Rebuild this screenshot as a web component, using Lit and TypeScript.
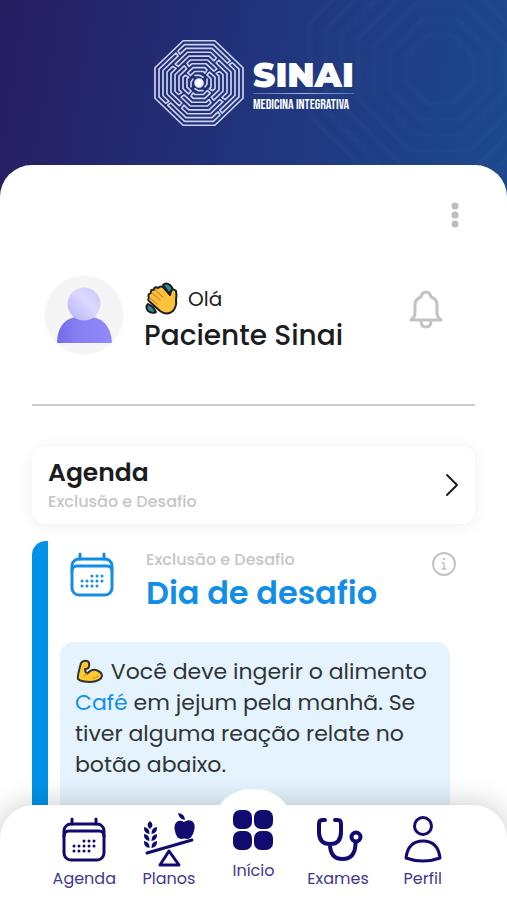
import { LitElement, html, svg, css } from "lit";
import { customElement } from "lit/decorators.js";

type Point = [number, number];

/** Upper part of an octagonal ring; start and end say how far it runs down each slanted side. */
function arc(radius: number, start: number, end: number): Point[] {
  const flat = radius * 0.36;
  const slant = radius - flat;
  return [
    [-flat - slant * start, -radius + slant * start],
    [-flat, -radius],
    [flat, -radius],
    [flat + slant * end, -radius + slant * end],
  ];
}

function hairpin(outer: number, start: number, end: number): string {
  const a = arc(outer, start, end);
  const b = arc(outer - 4, start, end).reverse();
  return `M${[...a, ...b].map((p) => p.map((n) => n.toFixed(1)).join(" ")).join("L")}Z`;
}

const octagon = (r: number): string => {
  const f = r * 0.36;
  return `M${-f} ${-r}H${f}L${r} ${-f}V${f}L${f} ${r}H${-f}L${-r} ${f}V${-f}Z`;
};

const quarter = [
  hairpin(40, 0.26, 0.66),
  hairpin(32, 0.6, 0.28),
  hairpin(24, 0.22, 0.6),
  hairpin(16, 0.54, 0.22),
].join("");

const maze = svg`
  <g transform="scale(1 .96)">
    <path d=${octagon(44)} />
    ${[0, 90, 180, 270].map((turn) => svg`<path d=${quarter} transform="rotate(${turn})" />`)}
    <path d="M-4-8H1L4-6M8-4V1L6 4M4 8H-1L-4 6M-8 4V-1L-6-4" />
  </g>
  <circle r="4" fill="#fff" stroke="#e6ebfb" stroke-dasharray="1 1" />`;

const calendar = svg`
  <rect x="2" y="7" width="40" height="36" rx="7" />
  <path d="M2 19q0-5 5-5h30q5 0 5 5M10 2v5M34 2v5" />
  <path class="dots" d="M22 24h.01M27 24h.01M32 24h.01M12 29h.01M17 29h.01M22 29h.01M27 29h.01M32 29h.01M12 34h.01M17 34h.01M22 34h.01M27 34h.01" />`;

const plans = svg`
  <path d="M4 36L49 23M26 34L17 48H36Z" />
  <g fill="currentColor" stroke="none">
    <path d="M7 4q5 4 0 8q-5-4 0-8ZM1 10q6 1 5.500 7q-6-1-5.500-7ZM14 10q-6 1-5.500 7q6-1 5.500-7ZM1 17q6 1 5.500 7q-6-1-5.500-7ZM14 17q-6 1-5.500 7q6-1 5.500-7ZM1 24q6 1 5.500 7q-6-1-5.500-7ZM14 24q-6 1-5.500 7q6-1 5.500-7Z" />
    <path d="M41 5q4-3 8-1q4 3 2 10q-2 7-6 8q-4-1-7 0q-5-1-6-8q-2-7 3-10q3-1 6 1ZM35-4q7 1 7 7q-6-1-7-7Z" />
  </g>`;

const home = svg`
  <g fill="currentColor" stroke="none">
    <rect x="2" y="1" width="19" height="19" rx="7" />
    <rect x="23" y="1" width="19" height="19" rx="7" />
    <rect x="2" y="22" width="19" height="19" rx="7" />
    <rect x="23" y="22" width="19" height="19" rx="7" />
  </g>`;

const exams = svg`
  <path stroke-width="4" d="M9 3H6Q3 3 3 7v8q0 12 11 12T25 15V7q0-4-3-4h-3M14 27q0 15 12.500 15t13-15v-2" />
  <circle cx="40" cy="20" r="4.500" stroke-width="4" />`;

const profile = svg`
  <circle cx="22" cy="9" r="8.500" />
  <path d="M5 41Q7 24 22 24T39 41Q31 44 22 44T5 41Z" />`;

const tabs = [
  { label: "Agenda", icon: calendar },
  { label: "Planos", icon: plans },
  { label: "Início", icon: home, current: true },
  { label: "Exames", icon: exams },
  { label: "Perfil", icon: profile },
];

@customElement("app-root")
export class AppRoot extends LitElement {
  static styles = css`
    :host {
      display: flex;
      flex-direction: column;
      position: relative;
      height: 100vh;
      overflow: hidden;
      background: linear-gradient(100deg, #271c60 0, #21327a 45%, #1d4a8d 100%) top / 100% 240px no-repeat #fff;
      color: #1b1d20;
      font-family: Poppins, Inter, "Open Sans", sans-serif;
    }
    * { box-sizing: border-box; }
    h1, h2, p { margin: 0; }
    button {
      border: 0;
      padding: 0;
      background: none;
      color: inherit;
      font: inherit;
      cursor: pointer;
    }
    svg {
      display: block;
      flex: none;
      fill: none;
      stroke: currentColor;
      stroke-linecap: round;
      stroke-linejoin: round;
      overflow: visible;
    }
    .banner {
      display: flex;
      flex: none;
      align-items: center;
      justify-content: center;
      gap: 8px;
      height: 165px;
      position: relative;
      color: #fff;
    }
    .pattern {
      position: absolute;
      inset: 0;
      width: 100%;
      height: 100%;
      overflow: hidden;
      color: #4a86c8;
      opacity: 0.05;
    }
    .emblem { color: #cbd2ee; }
    .brand { display: flex; flex-direction: column; padding-top: 6px; }
    .brand-name {
      font: 900 34px/28px Montserrat, "Open Sans", sans-serif;
    }
    .brand-line {
      height: 1px;
      margin: 4px 0;
      background: linear-gradient(90deg, #5a6bb0, #aab4dc, #5a6bb0);
    }
    .brand-tag { font: 400 14px/13px "Bebas Neue", "Roboto Condensed", Roboto, sans-serif; white-space: nowrap; }
    .sheet {
      display: flex;
      flex: 1;
      flex-direction: column;
      min-height: 0;
      padding: 36px 32px 0;
      border-radius: 32px 32px 0 0;
      background: #fff;
      overflow: auto;
      scrollbar-width: none;
    }
    .more { align-self: flex-end; margin-right: 12px; color: #bdbdbd; }
    .greeting {
      display: flex;
      align-items: center;
      gap: 20px;
      padding: 46px 32px 49px 12px;
      border-bottom: 2px solid #cdcdcd;
    }
    .hello { display: flex; flex: 1; flex-direction: column; padding-top: 6px; }
    .hi { display: flex; align-items: center; gap: 10px; font-size: 20px; line-height: 36px; }
    .name { font-size: 28px; line-height: 38px; font-weight: 500; white-space: nowrap; }
    .bell { padding-bottom: 10px; color: #c3c3c3; }
    .agenda {
      display: flex;
      flex: none;
      align-items: center;
      justify-content: space-between;
      margin-top: 40px;
      padding: 10px 16px;
      border-radius: 14px;
      background: #fff;
      box-shadow: 0 2px 16px rgb(0 0 0 / 7%);
      text-align: left;
    }
    .agenda-text { display: flex; flex-direction: column; }
    .agenda-title { font-size: 25px; line-height: 34px; font-weight: 600; }
    .muted { color: #c6c6c6; font-size: 16px; line-height: 24px; font-weight: 500; }
    .challenge {
      display: flex;
      flex: 1 0 auto;
      flex-direction: column;
      gap: 28px;
      margin-top: 17px;
      padding: 7px 25px 0 12px;
      border-left: 16px solid #0092e8;
      border-radius: 14px 0 0 0;
      background: #fff;
    }
    .challenge-head { display: flex; align-items: flex-start; gap: 32px; padding-left: 10px; }
    .blue { color: #128fe4; }
    .challenge-icon { margin-top: 4px; }
    .challenge-text { flex: 1; white-space: nowrap; }
    .challenge-title { color: #128fe4; font-size: 32px; line-height: 42px; font-weight: 600; }
    .info { margin: 4px -6px 0 0; color: #c3c3c3; }
    .note {
      flex: 1;
      padding: 14px 15px;
      border-radius: 14px;
      background: #e4f3fd;
      color: #303436;
      font-size: 22px;
      line-height: 31px;
    }
    .note a { color: #128ff0; text-decoration: none; }
    .emoji { display: inline-block; vertical-align: -4px; }
    .tabs {
      position: absolute;
      inset: auto 0 0;
      display: grid;
      grid-template-columns: repeat(5, minmax(0, 1fr));
      padding: 12px 42px 9px;
      border-radius: 34px 34px 0 0;
      background: #fff;
      box-shadow: 0 0 30px rgb(0 0 0 / 22%);
    }
    .tab {
      display: flex;
      flex-direction: column;
      align-items: center;
      gap: 4px;
      color: #110b70;
      stroke-width: 3px;
    }
    .tab span { color: #3f378f; font-size: 16px; line-height: 24px; }
    .current { position: relative; margin-top: -8px; margin-bottom: 8px; }
    .current::before {
      content: "";
      position: absolute;
      top: -20px;
      width: 76px;
      height: 60px;
      border-radius: 36px 36px 0 0 / 32px 32px 0 0;
      background: #fff;
    }
    .current > * { position: relative; }
    .dots { stroke-width: 3px; }
  `;

  render() {
    return html`
      <header class="banner">
        <svg class="pattern" viewBox="0 0 507 166" preserveAspectRatio="xMaxYMid slice" stroke-width="5">
          ${[34, 50, 66, 82, 98, 114, 130].map((r) => svg`<path d=${octagon(r)} transform="translate(440 70)" />`)}
        </svg>
        <svg class="emblem" width="92" height="88" viewBox="-46 -44 92 88" stroke-width="1.700" role="img" aria-label="Sinai">
          ${maze}
        </svg>
        <div class="brand">
          <span class="brand-name">SINAI</span>
          <span class="brand-line"></span>
          <span class="brand-tag">MEDICINA INTEGRATIVA</span>
        </div>
      </header>

      <main class="sheet">
        <button class="more" aria-label="Mais opções">
          <svg width="16" height="28" viewBox="0 0 16 28" stroke-width="7">
            <path d="M8 5h.01M8 14h.01M8 23h.01" />
          </svg>
        </button>

        <section class="greeting">
          <svg width="80" height="80" viewBox="0 0 80 80" stroke="none" role="img" aria-label="Foto do paciente">
            <defs>
              <linearGradient id="head" x1="0" y1="1" x2="1" y2="0">
                <stop stop-color="#b9b1fb" /><stop offset=".6" stop-color="#dcd9fd" /><stop offset="1" stop-color="#c9c4fc" />
              </linearGradient>
              <linearGradient id="body" x1="0" y1="0" x2="1" y2="0">
                <stop stop-color="#746bea" /><stop offset=".4" stop-color="#8780f3" /><stop offset="1" stop-color="#9289fb" />
              </linearGradient>
            </defs>
            <circle cx="40" cy="40" r="39.500" fill="#f5f5f5" stroke="none" />
            <path d="M13 67Q14 41 40 41T68 67Q68 68 66 68H14Q13 68 13 67Z" fill="url(#body)" stroke="none" />
            <circle cx="40" cy="29" r="16.500" fill="url(#head)" stroke="none" />
          </svg>
          <div class="hello">
            <p class="hi">
              <svg width="34" height="34" viewBox="0 0 34 34" stroke="#14191b" stroke-width="2">
                <path d="M19 3Q22 0 26 3Q30 7 28 11L24 10ZM4 22Q1 25 4 29Q8 32 12 30L9 25Z" fill="#2b8790" />
                <path d="M5 16Q3 12 7 11Q6 7 10 8Q10 4 14 6Q17 3 20 6L26 13L27 9Q29 6 32 9Q33 13 32 18Q33 24 29 29Q23 34 16 29L6 20Q3 18 5 16Z" fill="#fbc23a" />
                <path d="M8 11L16 18M11 8L19 15M6 16L13 22" stroke="#d8912b" stroke-width="1.500" />
              </svg>
              Olá
            </p>
            <h1 class="name">Paciente Sinai</h1>
          </div>
          <button class="bell" aria-label="Notificações">
            <svg width="34" height="40" viewBox="0 0 34 40" stroke-width="3">
              <path d="M2 30Q6 27 6 23V15Q6 9 12 7Q13 2 17 2T22 7Q28 9 28 15V23Q28 27 32 30ZM12 31Q12 37 17 37T22 31" />
            </svg>
          </button>
        </section>

        <button class="agenda">
          <span class="agenda-text">
            <span class="agenda-title">Agenda</span>
            <span class="muted">Exclusão e Desafio</span>
          </span>
          <svg width="14" height="22" viewBox="0 0 14 22" stroke-width="2"><path d="M2 1L12 11L2 21" /></svg>
        </button>

        <section class="challenge">
          <div class="challenge-head">
            <svg class="blue challenge-icon" width="44" height="45" viewBox="0 0 44 45" stroke-width="3">${calendar}</svg>
            <div class="challenge-text">
              <p class="muted">Exclusão e Desafio</p>
              <h2 class="challenge-title">Dia de desafio</h2>
            </div>
            <button class="info" aria-label="Informações">
              <svg width="24" height="24" viewBox="0 0 24 24" stroke-width="2">
                <circle cx="12" cy="12" r="11" />
                <path d="M10 11h2v6M10 17h4" stroke-width="1.500" /><path d="M12 7h.01" stroke-width="2.500" />
              </svg>
            </button>
          </div>
          <p class="note">
            <svg class="emoji" width="30" height="26" viewBox="0 0 30 26" stroke="#20211c" stroke-width="2">
              <path d="M6 6Q8 3 12 4Q15 5 14 9Q14 12 10 12Q10 15 12 17Q16 12 21 13Q27 15 27 19Q26 24 16 25Q6 25 3 22Q2 20 6 6Z" fill="#fdc92f" />
              <path d="M12 17Q10 17 9 19M18 21q4 0 5-2" stroke="#e39a2c" stroke-width="1.500" />
            </svg>
            Você deve ingerir o alimento <a href="#cafe">Café</a> em jejum pela manhã. Se tiver alguma reação relate no botão abaixo.
          </p>
        </section>
      </main>

      <nav class="tabs">
        ${tabs.map(
          (tab) => html`
            <button class="tab ${tab.current ? "current" : ""}">
              <svg width=${tab.icon === plans ? 52 : 44} height="46" viewBox="0 0 ${tab.icon === plans ? 52 : 44} 46">${tab.icon}</svg>
              <span>${tab.label}</span>
            </button>
          `,
        )}
      </nav>
    `;
  }
}
